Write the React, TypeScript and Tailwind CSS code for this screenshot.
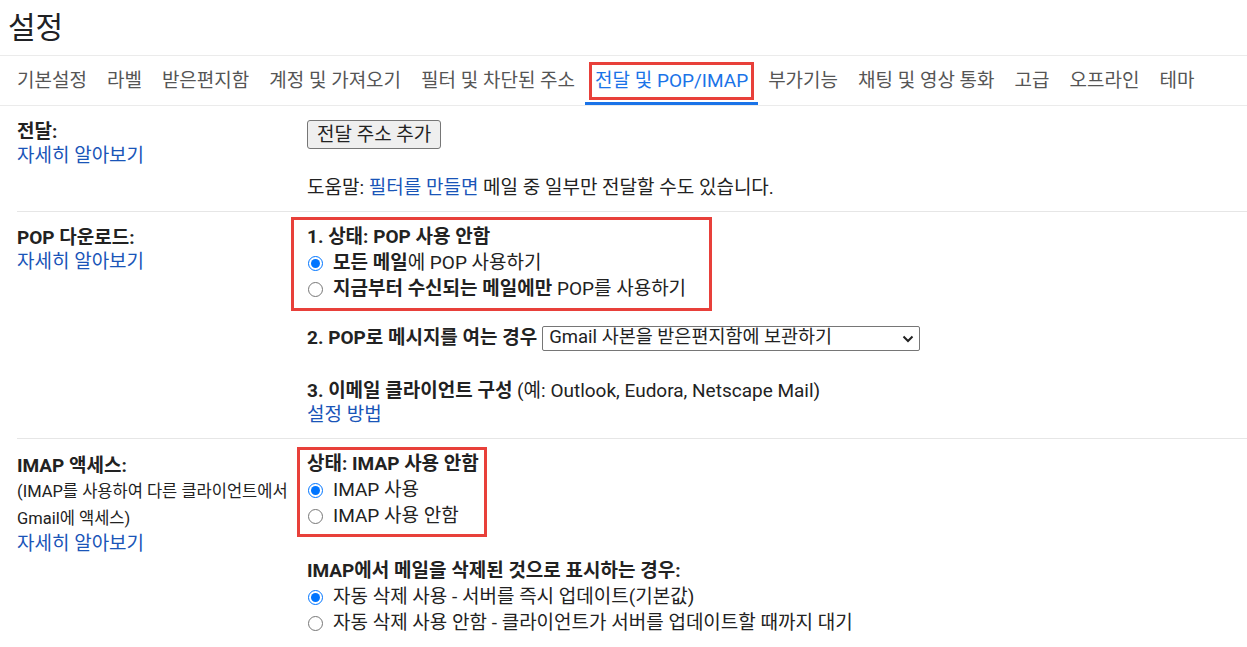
import React from "react";

const font = { fontFamily: "Roboto, 'Noto Sans CJK KR', sans-serif" };

const tabs = [
  "기본설정",
  "라벨",
  "받은편지함",
  "계정 및 가져오기",
  "필터 및 차단된 주소",
  "전달 및 POP/IMAP",
  "부가기능",
  "채팅 및 영상 통화",
  "고급",
  "오프라인",
  "테마",
];

function Radio({ checked, children }: { checked?: boolean; children: React.ReactNode }) {
  return (
    <label className="flex items-center h-[26px]">
      <input
        type="radio"
        checked={!!checked}
        readOnly
        className="ml-[1px] mr-[10px] w-[15px] h-[15px] accent-[#0075ff]"
      />
      <span>{children}</span>
    </label>
  );
}

function Link({ children }: { children: React.ReactNode }) {
  return <span className="text-[#1a55b8]">{children}</span>;
}

export default function App() {
  return (
    <div className="bg-white text-[#222] text-[19px] w-[1247px] h-[647px] overflow-hidden" style={font}>
      <div className="h-[56px] border-b border-[#ebebeb] flex items-center pl-2">
        <h1 className="text-[30px] leading-none text-[#202124]">설정</h1>
      </div>

      <div className="h-[50px] border-b border-[#ebebeb] flex pl-[7px]">
        {tabs.map((t, i) => {
          const active = i === 5;
          return (
            <div
              key={t}
              className={
                active
                  ? "px-[10px] pt-[4px] flex items-center border-b-[3px] border-[#1a73e8] text-[#1a73e8]"
                  : "px-[10px] pt-[4px] flex items-center border-b-[3px] border-transparent text-[#555]"
              }
            >
              {active ? (
                <span className="border-[3px] border-[#e8403a] px-[3px] -mx-[6px] h-[38px] flex items-center">{t}</span>
              ) : (
                <span>{t}</span>
              )}
            </div>
          );
        })}
      </div>

      <div className="ml-[17px]">
        {/* 전달 */}
        <div className="grid grid-cols-[290px_1fr] border-b border-[#e6e6e6] h-[106px] pt-[14px]">
          <div className="leading-6">
            <div className="font-bold">전달:</div>
            <Link>자세히 알아보기</Link>
          </div>
          <div>
            <button className="h-[29px] px-[9px] bg-[#efefef] border border-[#767676] rounded-[3px] leading-none">
              전달 주소 추가
            </button>
            <div className="mt-[26px] leading-6">
              도움말: <Link>필터를 만들면</Link> 메일 중 일부만 전달할 수도 있습니다.
            </div>
          </div>
        </div>

        {/* POP */}
        <div className="grid grid-cols-[290px_1fr] border-b border-[#e6e6e6] h-[227px] pt-[5px]">
          <div className="leading-6 mt-[9px]">
            <div className="font-bold">POP 다운로드:</div>
            <Link>자세히 알아보기</Link>
          </div>
          <div>
            <div className="-ml-4 w-[421px] border-[3px] border-[#e8403a] pl-[13px] pt-1 pb-[6px] leading-[26px]">
              <div className="font-bold">1. 상태: POP 사용 안함</div>
              <Radio checked>
                <b>모든 메일</b>에 POP 사용하기
              </Radio>
              <Radio>
                <b>지금부터 수신되는 메일에만</b> POP를 사용하기
              </Radio>
            </div>
            <div className="mt-[14px] flex items-center h-[26px] gap-[5px]">
              <span className="font-bold">2. POP로 메시지를 여는 경우</span>
              <div className="relative w-[378px] h-[25px] border border-[#767676] rounded-[2px] flex items-center pl-[6px] text-[18.5px]">
                Gmail 사본을 받은편지함에 보관하기
                <svg className="absolute right-[5px] top-[7px]" width="12" height="10" viewBox="0 0 12 10" fill="none">
                  <path d="M1.5 2.5 L6 7 L10.5 2.5" stroke="#222" strokeWidth="2" />
                </svg>
              </div>
            </div>
            <div className="mt-[28px] leading-6">
              <span className="font-bold">3. 이메일 클라이언트 구성</span> (예: Outlook, Eudora, Netscape Mail)
            </div>
            <div className="leading-6">
              <Link>설정 방법</Link>
            </div>
          </div>
        </div>

        {/* IMAP */}
        <div className="grid grid-cols-[290px_1fr] pt-[8px]">
          <div className="mt-[7px]">
            <div className="font-bold leading-6">IMAP 액세스:</div>
            <div className="text-[16.5px] leading-[27px]">(IMAP를 사용하여 다른 클라이언트에서</div>
            <div className="text-[16.5px] leading-[27px]">Gmail에 액세스)</div>
            <div className="leading-6">
              <Link>자세히 알아보기</Link>
            </div>
          </div>
          <div>
            <div className="-ml-[10px] w-[190px] border-[3px] border-[#e8403a] pl-[7px] pt-[1px] pb-[5px] leading-[26px]">
              <div className="font-bold">상태: IMAP 사용 안함</div>
              <Radio checked>IMAP 사용</Radio>
              <Radio>IMAP 사용 안함</Radio>
            </div>
            <div className="mt-[21px] leading-[26px]">
              <div className="font-bold">IMAP에서 메일을 삭제된 것으로 표시하는 경우:</div>
              <Radio checked>자동 삭제 사용 - 서버를 즉시 업데이트(기본값)</Radio>
              <Radio>자동 삭제 사용 안함 - 클라이언트가 서버를 업데이트할 때까지 대기</Radio>
            </div>
          </div>
        </div>
      </div>
    </div>
  );
}
